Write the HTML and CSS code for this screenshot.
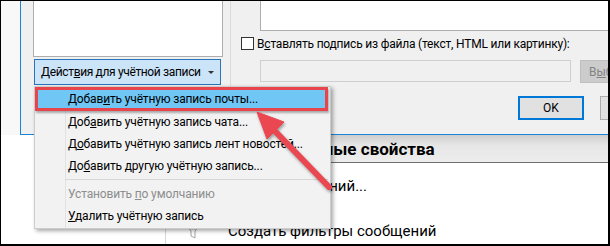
FILE: index.html
```html
<!DOCTYPE html>
<html lang="ru">
<head>
    <meta charset="UTF-8">
    <title>Параметры учётной записи</title>
    <link rel="stylesheet" href="styles.css">
</head>
<body>
    <div class="screen">
        <div class="top">
            <div class="behind"></div>
            <div class="dialog">
                <div class="accounts">
                    <div class="listbox"></div>
                    <button class="actions">Дейст<u>в</u>ия для учётной записи <span class="caret"></span></button>
                </div>
                <div class="splitter"></div>
                <div class="sign">
                    <div class="sign-edit"></div>
                    <label class="check"><span class="box"></span>В<u>с</u>тавлять подпись из файла (текст, HTML или картинку):</label>
                    <div class="file-row">
                        <div class="file-input"></div>
                        <button class="browse" disabled>В<u>ы</u>брать...</button>
                    </div>
                    <div class="buttons">
                        <button class="ok">OK</button>
                        <button class="cancel">Отмена</button>
                    </div>
                </div>
            </div>
        </div>

        <div class="backstage">
            <div class="nav"></div>
            <div class="content">
                <div class="band"><h3>Дополнительные свойства</h3></div>
                <ul class="links">
                    <li><span class="ico"></span>Поиск сообщений...</li>
                    <li>
                        <svg class="ico" viewBox="0 0 20 20" width="20" height="20">
                            <path d="M2 3h16l-6 7v7l-4-2v-5z" fill="none" stroke="#a5a5a5" stroke-width="1"/>
                            <path d="M5 6h10M7 8h6" stroke="#c4c4c4" stroke-width="1"/>
                        </svg>
                        Создать фильтры сообщений
                    </li>
                </ul>
            </div>
        </div>

        <div class="menu">
            <div class="item hot">Добав<u>и</u>ть учётную запись почты...</div>
            <div class="item">Доб<u>а</u>вить учётную запись чата...</div>
            <div class="item">Д<u>о</u>бавить учётную запись лент новостей...</div>
            <div class="item">До<u>б</u>авить другую учётную запись...</div>
            <div class="sep"></div>
            <div class="item disabled">Установить <u>п</u>о умолчанию</div>
            <div class="item"><u>У</u>далить учётную запись</div>
        </div>

        <!-- annotation arrow -->
        <svg class="arrow" viewBox="0 0 610 246" width="610" height="246">
            <g fill="#ea4751" stroke="#ea4751">
                <line x1="329" y1="187" x2="273" y2="129" stroke-width="6" stroke-linecap="round"/>
                <polygon points="257,112 284,122 267,139" stroke-width="1" stroke-linejoin="round"/>
            </g>
        </svg>
    </div>
</body>
</html>
```

FILE: styles.css
```css
body {
    margin: 0;
    font-family: Roboto, "Liberation Sans", sans-serif;
    font-size: 12px;
    color: #000;
}
.screen {
    position: relative;
    width: 610px;
    height: 246px;
    box-sizing: border-box;
    border-style: solid;
    border-color: #000;
    border-width: 1px 2px 2px 1px;
    background: #fff;
    overflow: hidden;
}
.top {
    display: flex;
    height: 134px;
}
.behind {
    flex: 0 0 19px;
    background: #f8f8f8;
}
.dialog {
    flex: 1;
    min-width: 0;
    display: flex;
    background: #f0f0f0;
    border-left: 1px solid #1883d7;
    border-bottom: 1px solid #1883d7;
}
.accounts {
    flex: 0 0 209px;
    padding-left: 12px;
    box-sizing: border-box;
}
.listbox {
    width: 190px;
    height: 56px;
    box-sizing: border-box;
    background: #fff;
    border: 1px solid #adadad;
    border-top: none;
}
.actions {
    display: block;
    width: 187px;
    height: 26px;
    margin: 2px 0 0 1px;
    padding: 0 0 0 6px;
    text-align: left;
    white-space: nowrap;
    font: inherit;
    letter-spacing: -0.35px;
    color: #000;
    background: #cce4f7;
    border: 1px solid #2a74bd;
}
.caret {
    display: inline-block;
    margin-left: 5px;
    vertical-align: middle;
    border-left: 3px solid transparent;
    border-right: 3px solid transparent;
    border-top: 3px solid #333;
}
.splitter {
    flex: 0 0 1px;
    background: #dadada;
}
.sign {
    flex: 1;
    min-width: 0;
    display: flex;
    flex-direction: column;
    overflow: hidden;
}
.sign-edit {
    flex: 0 0 30px;
    width: 400px;
    margin-left: 29px;
    box-sizing: border-box;
    background: #fff;
    border-left: 1px solid #adadad;
    border-bottom: 1px solid #adadad;
}
.check {
    display: flex;
    align-items: center;
    height: 13px;
    margin-top: 6px;
    padding-left: 10px;
    letter-spacing: -0.2px;
    white-space: nowrap;
}
.box {
    flex: 0 0 13px;
    height: 13px;
    box-sizing: border-box;
    margin-right: 3px;
    background: #fff;
    border: 1px solid #333;
}
.file-row {
    display: flex;
    margin-top: 10px;
    padding-left: 29px;
}
.file-input {
    flex: 0 0 311px;
    height: 22px;
    box-sizing: border-box;
    border: 1px solid #cfcfcf;
}
.browse {
    flex: 0 0 80px;
    height: 23px;
    margin-left: 9px;
    padding: 0 0 0 8px;
    text-align: left;
    font: inherit;
    color: #838383;
    background: #cccccc;
    border: 1px solid #bfbfbf;
}
.buttons {
    display: flex;
    margin-top: 13px;
    padding-left: 287px;
    gap: 16px;
}
.buttons button {
    flex: 0 0 66px;
    height: 24px;
    font: inherit;
    color: #000;
    background: #e1e1e1;
    border: 1px solid #adadad;
    padding: 0;
}
.buttons .ok {
    border: 2px solid #0078d7;
}
.backstage {
    display: flex;
    height: 109px;
}
.nav {
    flex: 0 0 164px;
    border-right: 1px solid #d6d6d6;
}
.content {
    flex: 1;
    min-width: 0;
}
.band {
    height: 27px;
    background: linear-gradient(to bottom, #cdcdcd 0, #e6e6e6 10px, #ededed 100%);
    border-bottom: 1px solid #6f6f6f;
}
.band h3 {
    margin: 0;
    padding-left: 51px;
    font-size: 17px;
    font-weight: bold;
    line-height: 28px;
    white-space: nowrap;
}
.links {
    list-style: none;
    margin: 0;
    padding: 12px 0 0 17px;
    font-size: 15px;
}
.links li {
    display: flex;
    align-items: center;
    height: 22px;
    margin-bottom: 23px;
    white-space: nowrap;
}
.links .ico {
    flex: 0 0 20px;
    height: 20px;
    margin-right: 25px;
}
.menu {
    position: absolute;
    left: 33px;
    top: 85px;
    width: 297px;
    box-sizing: border-box;
    padding-bottom: 1px;
    background: #f2f2f2 linear-gradient(to right, transparent 30px, #e2e2e2 30px, #e2e2e2 31px, transparent 31px);
    border: 1px solid #cccccc;
    box-shadow: 2px 2px 4px rgba(0, 0, 0, 0.35);
    letter-spacing: -0.15px;
}
.item {
    height: 22px;
    line-height: 22px;
    padding-left: 33px;
    white-space: nowrap;
}
.item.hot {
    height: 24px;
    line-height: 18px;
    box-sizing: border-box;
    margin-right: 2px;
    padding-left: 30px;
    background: #70c6f4;
    border: 3px solid #e8444c;
    box-shadow: 1px 2px 2px rgba(0, 0, 0, 0.3);
}
.item.disabled {
    color: #8d8d8d;
}
.sep {
    height: 6px;
    margin: 0 2px 0 30px;
    background: linear-gradient(to bottom, transparent 2px, #d7d7d7 2px, #d7d7d7 3px, transparent 3px);
}
.arrow {
    position: absolute;
    left: -1px;
    top: -1px;
    filter: drop-shadow(1px 2px 1.5px rgba(0, 0, 0, 0.35));
}
```
